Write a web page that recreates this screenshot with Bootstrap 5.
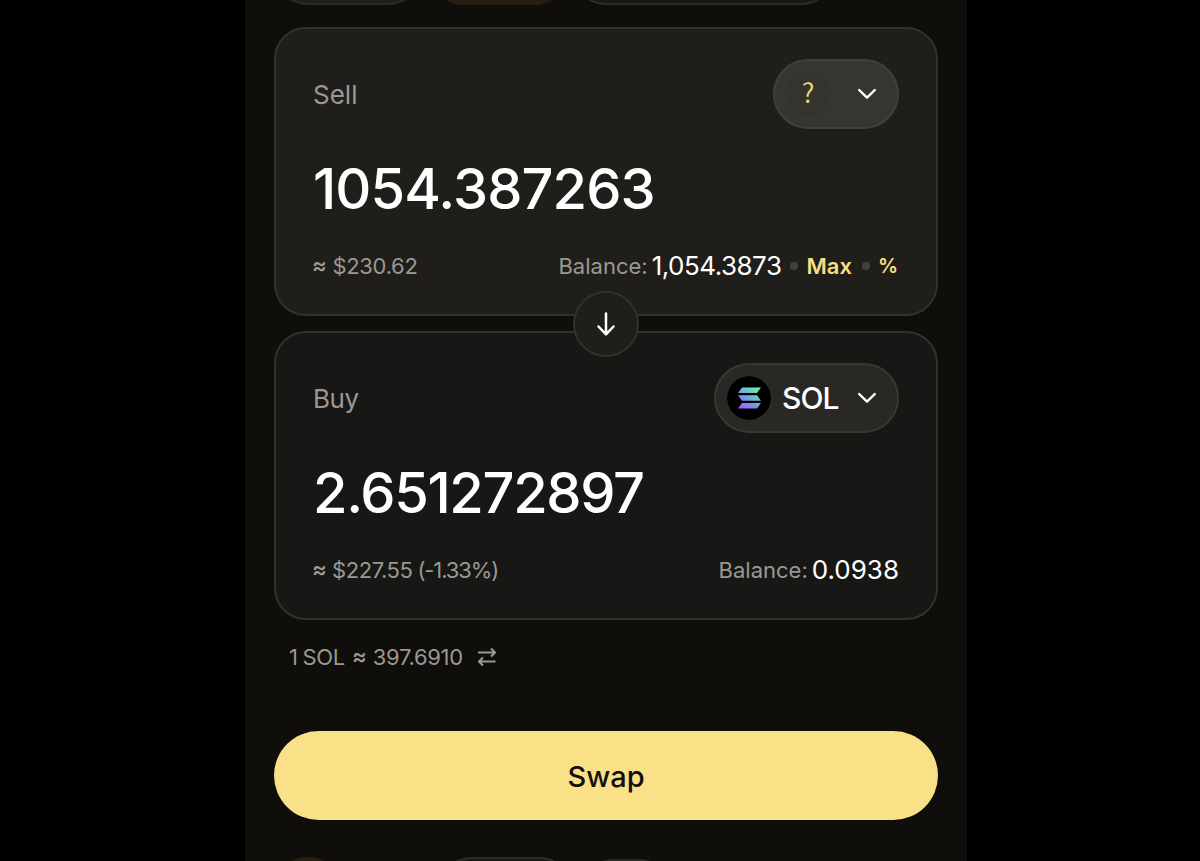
<!DOCTYPE html>
<html lang="en">
<head>
<meta charset="utf-8">
<meta name="viewport" content="width=device-width, initial-scale=1">
<title>Swap</title>
<link rel="stylesheet" href="https://cdn.jsdelivr.net/npm/bootstrap@5.3.0/dist/css/bootstrap.min.css">
<style>
body{background:#000;font-family:Inter,"Liberation Sans",sans-serif;color:#fff;height:861px;overflow:hidden}
.panel{width:722px;height:861px;margin-left:245px;padding:0 29px;background:#0f0e0a;overflow:hidden}
.chips{height:5px}
.chip{height:70px;border:2px solid #2c2b28;border-radius:34px;flex:none}
.chip-gold{background:#271f13;border-color:#271f13}
.chip-dark{background:#171717}
.chip-warm{background:#1f1e1a}
.token-box{height:289px;border:2px solid #32312e;border-radius:32px;padding:30px 37px 0}
.token-box.sell{background:#1f1e1a;margin-top:22px}
.token-box.buy{background:#171715;margin-top:15px}
.side{font-size:26px;line-height:71px;color:#9b9893}
.token-pill{height:70px;border-radius:35px;border:2px solid #393732;background:#2a2824;color:#fff;padding:0 20px 0 11px;width:185px}
.token-pill.empty{background:#373530;border-color:#42403c;width:126px}
.token-icon{width:44px;height:44px;border-radius:50%;flex:none}
.token-pill.empty .token-icon{background:#35332e;color:#f0d975;font:350 27px/40px "Noto Sans CJK SC",sans-serif}
.symbol{font-size:30px;font-weight:500;line-height:40px;margin-left:11px;letter-spacing:-1px}
.amount{font-size:56px;font-weight:500;line-height:57px;height:60px;margin-top:32px;letter-spacing:-.9px;white-space:nowrap}
.buy .amount{letter-spacing:-1.35px}
.meta{font-size:22px;line-height:30px;margin-top:30px;color:#9b9893;white-space:nowrap}
.approx{letter-spacing:-.3px;margin-left:-1px}
.tilde{font-weight:600;display:inline-block;transform:translateY(-1px)}
.change{letter-spacing:-1.1px;margin-left:5px}
.bal{font-size:26px;color:#fff;margin-left:4px}
.bal.long{letter-spacing:-.5px}
.gold{color:#f8de81}
.max-link{font-size:22px;font-weight:600;margin-left:8px}
.pct-link{font-size:20px;font-weight:600;margin:0 1px 0 8px}
.dot{width:8px;height:8px;border-radius:50%;background:#43413d}
.flip{position:absolute;left:50%;bottom:-43px;width:66px;height:66px;margin-left:-33px;border:2px solid #32312e;border-radius:50%;background:#1f1e1a;z-index:2}
.rate{font-size:22px;line-height:30px;color:#9b9893;margin:22px 0 0 15px;white-space:nowrap}
.swap-btn,.swap-btn:hover{height:89px;border-radius:45px;background:#fae087;color:#12100b;border:0;font-size:29px;font-weight:500;margin-top:59px;padding:2px 0 0}
</style>
</head>
<body>
<main class="panel d-flex flex-column">
  <div class="chips d-flex align-items-end">
    <div class="chip chip-warm" style="width:148px"></div>
    <div class="chip chip-gold" style="width:138px;margin-left:8px"></div>
    <div class="chip chip-dark" style="width:263px;margin-left:4px"></div>
  </div>

  <section class="token-box sell position-relative flex-shrink-0">
    <div class="d-flex justify-content-between" style="height:70px">
      <span class="side">Sell</span>
      <button class="token-pill empty d-flex align-items-center justify-content-between">
        <span class="token-icon text-center">?</span>
        <svg width="20" height="12" viewBox="0 0 20 12" fill="none" stroke="#fff" stroke-width="2.4" stroke-linecap="round" stroke-linejoin="round"><path d="M2.2 2 10 9.7 17.8 2"/></svg>
      </button>
    </div>
    <div class="amount">1054.387263</div>
    <div class="meta d-flex justify-content-between">
      <span class="approx"><span class="tilde">≈</span> $230.62</span>
      <span class="d-flex align-items-center">
        <span>Balance:</span><span class="bal long">1,054.3873</span>
        <i class="dot" style="margin-left:9px"></i><span class="gold max-link">Max</span>
        <i class="dot" style="margin-left:10px"></i><span class="gold pct-link">%</span>
      </span>
    </div>
    <div class="flip d-flex align-items-center justify-content-center">
      <svg width="20" height="26" viewBox="0 0 20 26" fill="none" stroke="#fff" stroke-width="2.5" stroke-linecap="round" stroke-linejoin="round"><path d="M10 2.500V23M2.500 15.500 10 23.300 17.500 15.500"/></svg>
    </div>
  </section>

  <section class="token-box buy flex-shrink-0">
    <div class="d-flex justify-content-between" style="height:70px">
      <span class="side" style="letter-spacing:-.5px">Buy</span>
      <button class="token-pill d-flex align-items-center">
        <svg class="token-icon" viewBox="0 0 44 44"><defs><linearGradient id="sol" gradientUnits="userSpaceOnUse" x1="31" y1="11" x2="14" y2="34"><stop stop-color="#6cf5a8"/><stop offset=".5" stop-color="#6fa8e0"/><stop offset="1" stop-color="#a455fa"/></linearGradient></defs><circle cx="22" cy="22" r="22" fill="#000"/><path fill="url(#sol)" d="M15 11.500H34L30 17H11ZM11 19.200H30L34 24.700H15ZM15 27H34L30 32.500H11Z"/></svg>
        <span class="symbol">SOL</span>
        <svg class="ms-auto" width="20" height="12" viewBox="0 0 20 12" fill="none" stroke="#fff" stroke-width="2.4" stroke-linecap="round" stroke-linejoin="round"><path d="M2.200 2 10 9.700 17.800 2"/></svg>
      </button>
    </div>
    <div class="amount">2.651272897</div>
    <div class="meta d-flex justify-content-between">
      <span><span class="approx" style="letter-spacing:-.45px"><span class="tilde">≈</span> $227.55</span><span class="change">(-1.33%)</span></span>
      <span class="d-flex align-items-center"><span>Balance:</span><span class="bal">0.0938</span></span>
    </div>
  </section>

  <div class="rate d-flex align-items-center">
    <span style="letter-spacing:-.3px;word-spacing:-1px">1 SOL</span><span class="tilde" style="margin-left:7px">≈</span><span style="margin-left:6px;letter-spacing:-.3px">397.6910</span>
    <svg style="margin-left:14px" width="20" height="20" viewBox="0 0 20 20" fill="none" stroke="#9b9893" stroke-width="2.1" stroke-linejoin="round"><path d="M1 5.500H18M14 1.500 18 5.500 14 9.500M18.500 14.500H2M6 10.500 2 14.500 6 18.500"/></svg>
  </div>

  <button class="btn swap-btn w-100 flex-shrink-0">Swap</button>

  <div class="d-flex align-items-start flex-shrink-0" style="margin-top:37px">
    <div class="chip chip-gold" style="width:68px"></div>
    <div class="chip chip-dark" style="width:135px;margin-left:96px"></div>
    <div class="chip chip-warm" style="width:92px;margin:2px 0 0 7px"></div>
  </div>
</main>
<script src="https://cdn.jsdelivr.net/npm/bootstrap@5.3.0/dist/js/bootstrap.bundle.min.js"></script>
</body>
</html>
